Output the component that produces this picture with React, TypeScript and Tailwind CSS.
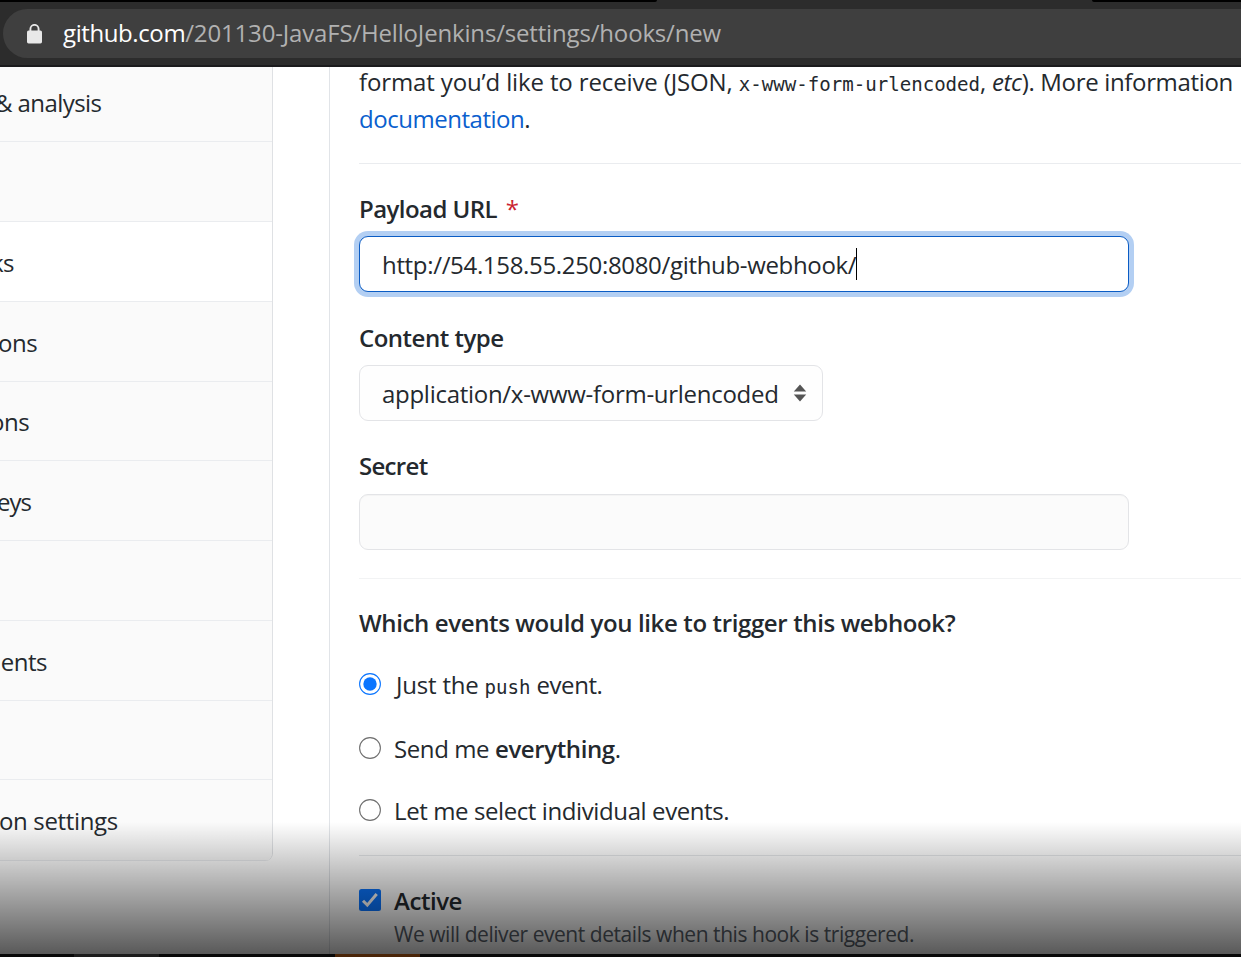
import type { ReactNode } from "react";

const sidebar = [
  { text: "& analysis", row: "h-[75px] bg-[#fafafa] pb-[3px]", label: "-ml-[5px] tracking-[-0.57px]" },
  { text: "", row: "h-[80px] bg-[#fafafa]", label: "" },
  { text: "ks", row: "h-[80px] bg-white pt-[2px]", label: "-ml-[9px] tracking-[-0.5px]" },
  { text: "ons", row: "h-[80px] bg-[#fafafa] pt-[2px]", label: "-ml-[2px] tracking-[-0.5px]" },
  { text: "ons", row: "h-[79px] bg-[#fafafa] pt-[2px]", label: "-ml-[10px] tracking-[-0.5px]" },
  { text: "eys", row: "h-[80px] bg-[#fafafa] pt-[2px]", label: "-ml-[3px] tracking-[-1px]" },
  { text: "", row: "h-[80px] bg-[#fafafa]", label: "" },
  { text: "ments", row: "h-[80px] bg-[#fafafa] pt-[2px]", label: "-ml-[21px] tracking-[-0.5px]" },
  { text: "", row: "h-[79px] bg-[#fafafa]", label: "" },
  { text: "on settings", row: "h-[81px] bg-[#fafafa] pt-[2px]", label: "-ml-[1px] tracking-[-0.35px]" },
];

function Radio({ checked }: { checked?: boolean }) {
  return (
    <svg className="size-[22px] shrink-0" viewBox="0 0 22 22">
      <circle cx="11" cy="11" r="10.4" fill="#fff" stroke={checked ? "#0a75ff" : "#6f6f6f"} strokeWidth="1.1" />
      {checked && <circle cx="11" cy="11" r="6.7" fill="#0a75ff" />}
    </svg>
  );
}

function Option({ checked, className, children }: { checked?: boolean; className: string; children: ReactNode }) {
  return (
    <label className={`flex h-[36px] items-center gap-[13px] whitespace-nowrap ${className}`}>
      <Radio checked={checked} />
      <span className="pt-[2px] leading-[36px]">{children}</span>
    </label>
  );
}

export default function App() {
  return (
    <div className="relative flex h-[957px] w-[1241px] flex-col overflow-hidden bg-white font-['Open_Sans','Noto_Sans',sans-serif] text-[24px] text-[#24292e]">
      <header className="flex h-[67px] shrink-0 flex-col border-b-2 border-[#1b1b1d] bg-[#2c2c2c]">
        <div className="flex h-[9px] items-start justify-between">
          <div className="h-[2px] w-[657px] rounded-br-[3px] bg-black" />
          <div className="h-[2px] w-[149px] rounded-bl-[3px] bg-black" />
        </div>
        <div className="ml-[3px] flex h-[49px] items-center rounded-l-full bg-[#3f3f3f] pl-[24px]">
          <svg className="h-[20px] w-[15px] shrink-0" viewBox="0 0 15 20">
            <path d="M3.4 8V5a4.1 4.1 0 0 1 8.2 0v3" fill="none" stroke="#e8e8e8" strokeWidth="1.9" />
            <rect y="6.6" width="15" height="12.8" rx="1.6" fill="#e8e8e8" />
          </svg>
          <span className="ml-[21px] whitespace-nowrap pb-[2px] leading-[47px] tracking-[-0.17px] text-[#b1b1b1]">
            <span className="tracking-[-0.4px] text-white">github.com</span>/201130-JavaFS/HelloJenkins/settings/hooks/new
          </span>
        </div>
      </header>

      <div className="flex h-[887px] shrink-0 overflow-hidden">
        <nav className="flex h-[794px] w-[273px] shrink-0 flex-col overflow-hidden rounded-br-[8px] border-r border-[#dfe1e4]">
          {sidebar.map((item, i) => (
            <div key={i} className={`flex shrink-0 items-center whitespace-nowrap border-b border-[#eaecef] ${item.row}`}>
              <span className={item.label}>{item.text}</span>
            </div>
          ))}
        </nav>

        <main className="ml-[56px] flex w-[912px] shrink-0 flex-col border-l border-[#e1e4e8] pl-[29px]">
          <p className="-mt-[4px] whitespace-nowrap leading-[37px]">
            <span className="tracking-[-0.13px]">format you’d like to receive (JSON, </span>
            <code className="font-['DejaVu_Sans_Mono',monospace] text-[19.1px] leading-none">x-www-form-urlencoded</code>
            <span className="tracking-[-0.33px]">, <em>etc</em>). More information</span>
            <br />
            <a className="tracking-[-0.47px] text-[#0b5fce]">documentation</a>.
          </p>
          <div className="mt-[26px] h-px shrink-0 bg-[#eaecef]" />

          <label className="mt-[27px] h-[36px] font-semibold leading-[36px] tracking-[-0.55px]">
            Payload URL <span className="ml-[3px] font-normal text-[#cb2431]">*</span>
          </label>
          <div className="mt-[9px] flex h-[56px] w-[770px] shrink-0 items-center rounded-[9px] border border-[#0b5cc4] bg-white pl-[22px] ring-[5px] ring-[#b3cff3]">
            <span className="whitespace-nowrap pt-[2px] tracking-[-0.33px]">http://54.158.55.250:8080/github-webhook/</span>
            <span className="h-[32px] w-px bg-black" />
          </div>

          <label className="mt-[28px] h-[36px] font-semibold leading-[36px] tracking-[-0.5px]">Content type</label>
          <div className="mt-[9px] flex h-[56px] w-[464px] shrink-0 items-center justify-between rounded-[9px] border border-[#e3e4e7] bg-[#fefefe] pl-[22px] pr-[15px]">
            <span className="whitespace-nowrap pt-[2px] tracking-[-0.28px]">application/x-www-form-urlencoded</span>
            <svg className="h-[18px] w-[14px] shrink-0" viewBox="0 0 14 18">
              <path d="M7 .5 13.2 7.4H.8zM7 17.5.8 10.6h12.4z" fill="#555" />
            </svg>
          </div>

          <label className="mt-[27px] h-[36px] font-semibold leading-[36px] tracking-[-0.7px]">Secret</label>
          <div className="mt-[10px] h-[56px] w-[770px] shrink-0 rounded-[9px] border border-[#e3e4e7] bg-[#fbfbfb] shadow-[inset_0_1px_1px_rgba(0,0,0,0.03)]" />

          <div className="mt-[28px] h-px shrink-0 bg-[#f2f3f4]" />
          <h3 className="mt-[26px] h-[36px] whitespace-nowrap font-semibold leading-[36px] tracking-[-0.37px]">
            Which events would you like to trigger this webhook?
          </h3>
          <Option checked className="mt-[25px] tracking-[-0.4px]">
            <span className="ml-[2px] tracking-[-0.2px]">Just the </span>
            <code className="font-['DejaVu_Sans_Mono',monospace] text-[19.1px] leading-none tracking-normal">push</code> event.
          </Option>
          <Option className="mt-[28px] tracking-[-0.4px]">
            Send me <strong className="font-semibold">everything</strong>.
          </Option>
          <Option className="mt-[26px] tracking-[-0.4px]">Let me select individual events.</Option>
          <div className="mt-[27px] h-px shrink-0 bg-[#e6e8eb]" />

          <label className="mt-[26px] flex h-[36px] shrink-0 items-center gap-[13px]">
            <svg className="size-[22px] shrink-0" viewBox="0 0 22 22">
              <rect width="22" height="22" rx="2.5" fill="#0a75ff" />
              <path d="m4 11.8 4.3 4.3L17.7 5" fill="none" stroke="#fff" strokeWidth="3" />
            </svg>
            <span className="pt-[2px] font-semibold leading-[36px] tracking-[-0.45px]">Active</span>
          </label>
          <p className="ml-[35px] whitespace-nowrap text-[21px] leading-[32px] tracking-[-0.45px] text-[#586069]">
            We will deliver event details when this hook is triggered.
          </p>
        </main>
      </div>

      <footer className="flex h-[3px] shrink-0 bg-[#080808]">
        <div className="ml-[74px] h-full w-[85px] bg-[#1c1c1c]" />
        <div className="ml-[176px] h-full w-[85px] bg-[#4a2508]" />
      </footer>
      <div className="pointer-events-none absolute inset-x-0 bottom-[3px] h-[132px] bg-linear-to-b from-black/0 to-black/65" />
    </div>
  );
}
